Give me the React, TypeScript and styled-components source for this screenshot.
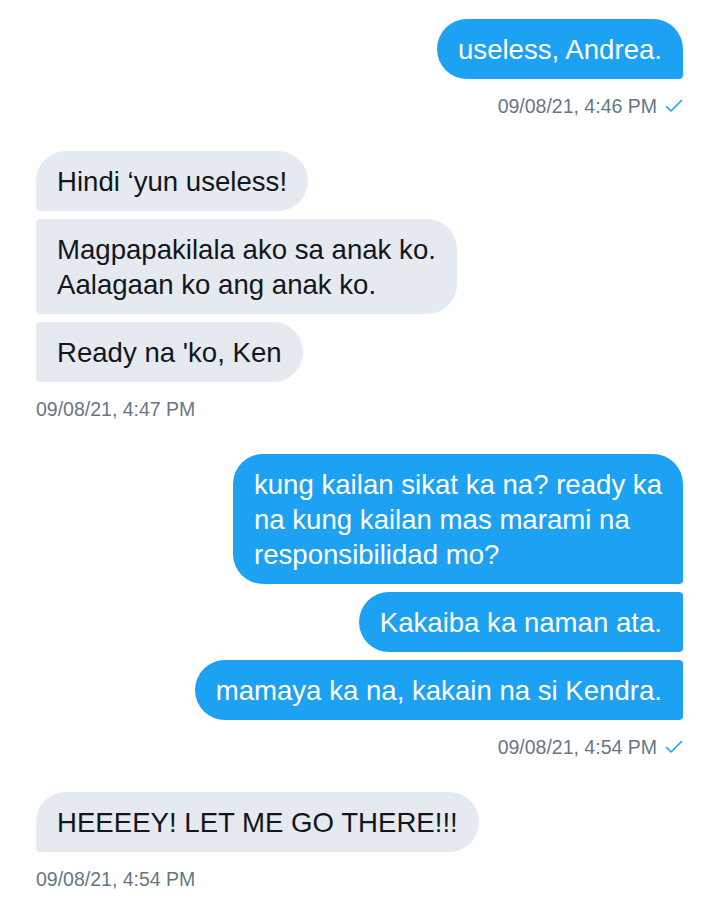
import React from 'react';
import styled, { createGlobalStyle } from 'styled-components';

type Side = 'sent' | 'received';

interface MessageGroup {
  side: Side;
  time: string;
  messages: string[];
}

const thread: MessageGroup[] = [
  { side: 'sent', time: '09/08/21, 4:46 PM', messages: ['useless, Andrea.'] },
  {
    side: 'received',
    time: '09/08/21, 4:47 PM',
    messages: [
      'Hindi ‘yun useless!',
      'Magpapakilala ako sa anak ko.\nAalagaan ko ang anak ko.',
      "Ready na 'ko, Ken",
    ],
  },
  {
    side: 'sent',
    time: '09/08/21, 4:54 PM',
    messages: [
      'kung kailan sikat ka na? ready ka\nna kung kailan mas marami na\nresponsibilidad mo?',
      'Kakaiba ka naman ata.',
      'mamaya ka na, kakain na si Kendra.',
    ],
  },
  { side: 'received', time: '09/08/21, 4:54 PM', messages: ['HEEEEY! LET ME GO THERE!!!'] },
];

const GlobalStyle = createGlobalStyle`
  html, body {
    margin: 0;
    padding: 0;
    background: #ffffff;
  }
  body {
    font-family: "Liberation Sans", Arial, sans-serif;
  }
`;

const Thread = styled.div`
  display: flex;
  flex-direction: column;
  gap: 33px;
  padding: 19px 36px 20px;
`;

const Group = styled.div<{ $side: Side }>`
  display: flex;
  flex-direction: column;
  align-items: ${(p) => (p.$side === 'sent' ? 'flex-end' : 'flex-start')};
  gap: 8px;
`;

// first bubble of a group keeps the rounded corner on the outer top side
const radius = (side: Side, first: boolean) => {
  if (side === 'sent') return first ? '30px 30px 4px 30px' : '30px 4px 4px 30px';
  return first ? '30px 30px 30px 4px' : '4px 30px 30px 4px';
};

const Bubble = styled.div<{ $side: Side; $first: boolean }>`
  padding: 12.5px 21px;
  font-size: 27.6px;
  line-height: 35px;
  white-space: pre-line;
  background: ${(p) => (p.$side === 'sent' ? '#1da1f2' : '#e4eaef')};
  color: ${(p) => (p.$side === 'sent' ? '#ffffff' : '#14171a')};
  border-radius: ${(p) => radius(p.$side, p.$first)};
`;

const Meta = styled.div`
  display: flex;
  align-items: center;
  gap: 8px;
  margin-top: 7px;
  font-size: 19.5px;
  line-height: 24px;
  color: #657786;
`;

const Check = () => (
  <svg width="18" height="14" viewBox="0 0 18 14" fill="none">
    <path d="M1.5 7.5 L6 12 L16.5 1.5" stroke="#1da1f2" strokeWidth="1.6" strokeLinecap="round" strokeLinejoin="round" />
  </svg>
);

export default function App() {
  return (
    <>
      <GlobalStyle />
      <Thread>
        {thread.map((group, gi) => (
          <Group key={gi} $side={group.side}>
            {group.messages.map((text, mi) => (
              <Bubble key={mi} $side={group.side} $first={mi === 0}>
                {text}
              </Bubble>
            ))}
            <Meta>
              {group.time}
              {group.side === 'sent' && <Check />}
            </Meta>
          </Group>
        ))}
      </Thread>
    </>
  );
}
